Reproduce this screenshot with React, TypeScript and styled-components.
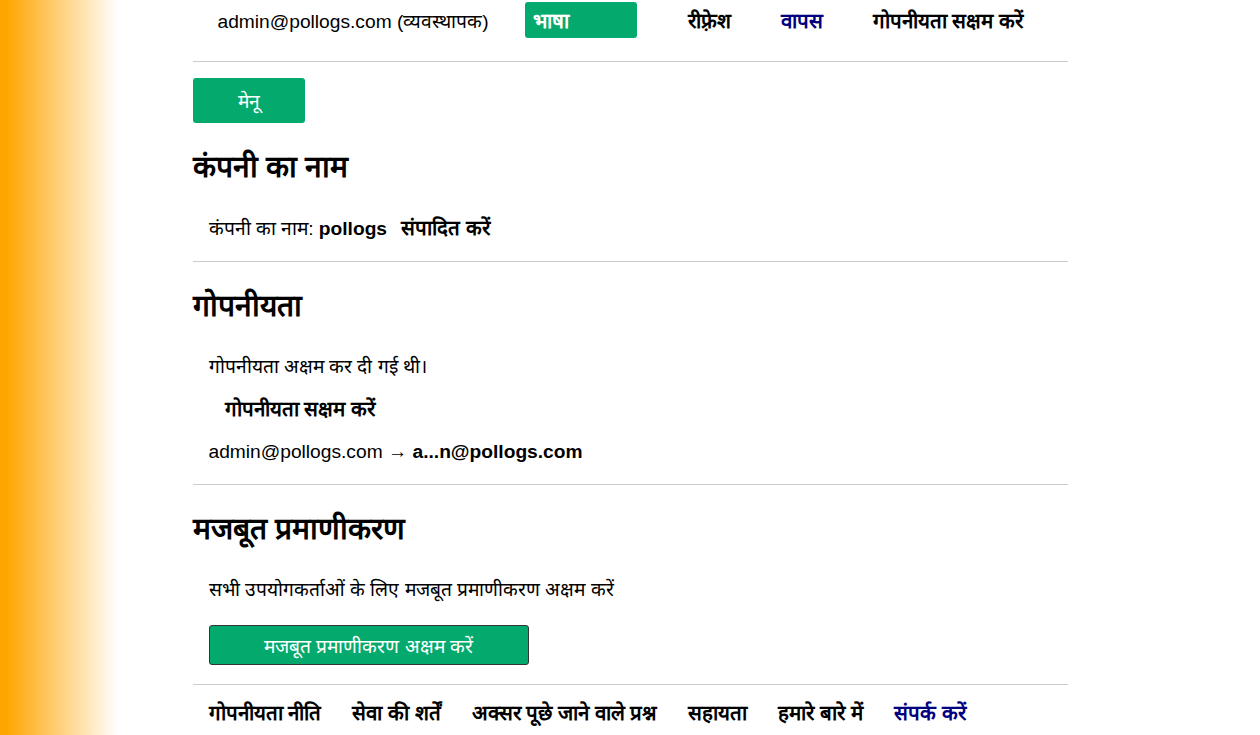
import styled, { createGlobalStyle } from "styled-components";

const GREEN = "#04aa6d";
const NAVY = "#000080";

const GlobalStyle = createGlobalStyle`
  html, body {
    margin: 0;
    padding: 0;
  }
  body {
    min-height: 735px;
    background: linear-gradient(90deg, #ffa500 0, #ffa500 6px, #ffffff 118px);
    font-family: "Liberation Sans", Arial, sans-serif;
    font-size: 19.2px;
    color: #000;
  }
`;

const Page = styled.div`
  width: 875px;
  margin: 0 auto;
`;

const TopBar = styled.nav`
  display: flex;
  align-items: center;
  height: 40px;
  padding-bottom: 21px;
  border-bottom: 1px solid #ccc;
`;

const UserLabel = styled.span`
  padding: 0 25px;
  white-space: nowrap;
`;

const NavLink = styled.a<{ $navy?: boolean }>`
  padding: 0 25px;
  font-size: 20.5px;
  font-weight: bold;
  white-space: nowrap;
  color: ${(p) => (p.$navy ? NAVY : "#000")};
  text-decoration: none;
  cursor: pointer;
`;

const LangButton = styled.button`
  flex: none;
  width: 112px;
  height: 36px;
  margin: 0 26px 0 11px;
  padding: 0 8px;
  background: ${GREEN};
  color: #fff;
  border: none;
  border-radius: 3px;
  text-align: left;
  font-family: inherit;
  font-size: 20.5px;
  font-weight: bold;
`;

const MenuButton = styled.button`
  display: block;
  width: 112px;
  height: 45px;
  margin-top: 16px;
  background: ${GREEN};
  color: #fff;
  border: none;
  border-radius: 3px;
  font-family: inherit;
  font-size: 19.2px;
`;

const Section = styled.section`
  padding-bottom: 11px;
  border-bottom: 1px solid #ccc;
`;

const Heading = styled.h2`
  margin: 0;
  padding: 24px 0 20px;
  font-size: 30px;
  font-weight: bold;
  line-height: 40px;
`;

const Line = styled.p<{ $indent?: number }>`
  margin: 0;
  padding-left: ${(p) => p.$indent ?? 16}px;
  line-height: 42px;
  white-space: nowrap;
`;

const Strong = styled.b<{ $gap?: number }>`
  margin-left: ${(p) => p.$gap ?? 0}px;
  font-size: 20.5px;
`;

const WideButton = styled.button`
  display: block;
  width: 320px;
  height: 40px;
  margin: 14px 0 8px 16px;
  background: ${GREEN};
  color: #fff;
  border: 1px solid #333;
  border-radius: 3px;
  font-family: inherit;
  font-size: 19.2px;
`;

const Footer = styled.footer`
  display: flex;
  gap: 31px;
  padding: 13px 16px;
`;

const FooterLink = styled.a<{ $navy?: boolean }>`
  font-size: 20.5px;
  font-weight: bold;
  white-space: nowrap;
  color: ${(p) => (p.$navy ? NAVY : "#000")};
  text-decoration: none;
  cursor: pointer;
`;

export default function App() {
  return (
    <>
      <GlobalStyle />
      <Page>
        <TopBar>
          <UserLabel>admin@pollogs.com (व्यवस्थापक)</UserLabel>
          <LangButton>भाषा</LangButton>
          <NavLink>रीफ़्रेश</NavLink>
          <NavLink $navy>वापस</NavLink>
          <NavLink>गोपनीयता सक्षम करें</NavLink>
        </TopBar>

        <MenuButton>मेनू</MenuButton>

        <Section>
          <Heading>कंपनी का नाम</Heading>
          <Line>
            कंपनी का नाम: <b>pollogs</b>
            <Strong $gap={14}>संपादित करें</Strong>
          </Line>
        </Section>

        <Section>
          <Heading>गोपनीयता</Heading>
          <Line>गोपनीयता अक्षम कर दी गई थी।</Line>
          <Line $indent={32}>
            <Strong>गोपनीयता सक्षम करें</Strong>
          </Line>
          <Line>
            admin@pollogs.com → <b>a...n@pollogs.com</b>
          </Line>
        </Section>

        <Section>
          <Heading>मजबूत प्रमाणीकरण</Heading>
          <Line>सभी उपयोगकर्ताओं के लिए मजबूत प्रमाणीकरण अक्षम करें</Line>
          <WideButton>मजबूत प्रमाणीकरण अक्षम करें</WideButton>
        </Section>

        <Footer>
          <FooterLink>गोपनीयता नीति</FooterLink>
          <FooterLink>सेवा की शर्तें</FooterLink>
          <FooterLink>अक्सर पूछे जाने वाले प्रश्न</FooterLink>
          <FooterLink>सहायता</FooterLink>
          <FooterLink>हमारे बारे में</FooterLink>
          <FooterLink $navy>संपर्क करें</FooterLink>
        </Footer>
      </Page>
    </>
  );
}
